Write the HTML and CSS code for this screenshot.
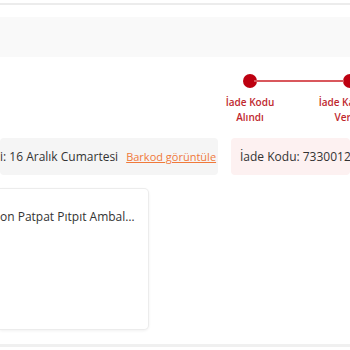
FILE: index.html
```html
<!DOCTYPE html>
<html lang="tr">
<head>
  <meta charset="UTF-8">
  <title>İade Detayı</title>
  <link rel="stylesheet" href="styles.css">
</head>
<body>
  <div class="topbar"></div>
  <div class="band"></div>

  <div class="stepper">
    <div class="step active">
      <span class="dot"></span>
      <span class="label">İade Kodu<br>Alındı</span>
    </div>
    <div class="step active">
      <span class="dot"></span>
      <span class="label">İade Kargoya<br>Verildi</span>
    </div>
  </div>

  <div class="info-row">
    <div class="info gray">
      <span>i: 16 Aralık Cumartesi</span>
      <a href="#" class="barcode">Barkod görüntüle</a>
    </div>
    <div class="info pink">
      <span>İade Kodu: 7330012345</span>
    </div>
  </div>

  <div class="product-card">
    <p class="product-name">on Patpat Pıtpıt Ambal…</p>
  </div>

  <div class="bottombar"></div>
</body>
</html>
```

FILE: styles.css
```css
* {
  margin: 0;
  padding: 0;
  box-sizing: border-box;
}

body {
  width: 350px;
  height: 350px;
  overflow: hidden;
  background: #ffffff;
  font-family: "Open Sans", "Noto Sans", sans-serif;
  color: #333333;
}

/* Top */
.topbar {
  margin-top: 3px;
  height: 2px;
  background: #ececec;
}

.band {
  margin-top: 12px;
  height: 40px;
  background: #f9f9f9;
}

/* Stepper */
.stepper {
  display: flex;
  margin-top: 17px;
  padding-left: 200px;
}

.step {
  position: relative;
  width: 100px;
  flex-shrink: 0;
  display: flex;
  flex-direction: column;
  align-items: center;
}

.step + .step::before {
  content: "";
  position: absolute;
  top: 6px;
  right: 56px;
  width: 90px;
  height: 2px;
  background: #d9575c;
}

.dot {
  width: 14px;
  height: 14px;
  border-radius: 50%;
  background: #bd0010;
}

.label {
  margin-top: 7px;
  font-size: 10px;
  font-weight: 600;
  line-height: 15px;
  text-align: center;
  color: #c0282e;
  white-space: nowrap;
}

/* Info boxes */
.info-row {
  display: flex;
  gap: 13px;
  margin-top: 13px;
}

.info {
  height: 37px;
  display: flex;
  align-items: center;
  font-size: 12px;
  border-radius: 4px;
  white-space: nowrap;
}

.gray {
  width: 218px;
  background: #f5f5f5;
  gap: 8px;
}

.pink {
  flex: 1;
  padding-left: 9px;
  background: #fdf1f1;
  overflow: hidden;
}

.barcode {
  color: #f0793a;
  font-size: 11px;
}

/* Product card */
.product-card {
  margin-top: 13px;
  width: 149px;
  height: 142px;
  background: #ffffff;
  border: 1px solid #ececec;
  border-left: none;
  border-radius: 0 5px 5px 0;
  box-shadow: 0 1px 3px rgba(0, 0, 0, 0.06);
  padding-top: 19px;
}

.product-name {
  font-size: 12px;
  white-space: nowrap;
  overflow: hidden;
}

/* Bottom */
.bottombar {
  margin-top: 14px;
  height: 3px;
  background: #f0f0f0;
}
```
